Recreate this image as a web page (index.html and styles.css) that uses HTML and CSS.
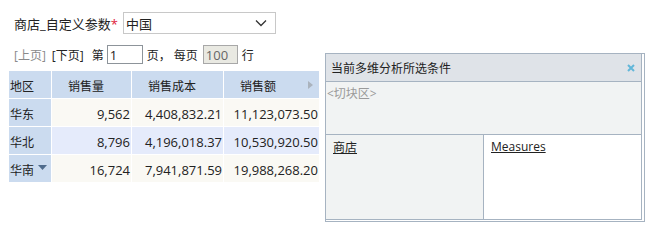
FILE: index.html
```html
<!DOCTYPE html>
<html lang="zh-CN">
<head>
    <meta charset="UTF-8">
    <title>多维分析</title>
    <link rel="stylesheet" href="styles.css">
</head>
<body>
    <div class="param-row">
        <span class="param-label">商店_自定义参数<span class="required">*</span></span>
        <div class="select-box">
            <span>中国</span>
            <svg class="chevron" width="12" height="8" viewBox="0 0 12 8"><path d="M1 1.5 L6 6.5 L11 1.5" fill="none" stroke="#333" stroke-width="1.3"/></svg>
        </div>
    </div>

    <div class="pager">
        <span class="disabled">[上页]</span>
        <span class="link">[下页]</span>
        <span class="word">第</span>
        <input class="page-input" type="text" value="1">
        <span class="word">页，</span>
        <span class="word">每页</span>
        <input class="page-input size" type="text" value="100" readonly>
        <span class="word">行</span>
    </div>

    <div class="grid">
        <div class="cell head dim">地区</div>
        <div class="cell head">销售量</div>
        <div class="cell head">销售成本</div>
        <div class="cell head last">销售额<svg class="more" width="5" height="8" viewBox="0 0 5 8"><path d="M0 0 L5 4 L0 8 Z" fill="#aab3bd"/></svg></div>

        <div class="cell dim">华东</div>
        <div class="cell num">9,562</div>
        <div class="cell num">4,408,832.21</div>
        <div class="cell num">11,123,073.50</div>

        <div class="cell dim">华北</div>
        <div class="cell num alt">8,796</div>
        <div class="cell num alt">4,196,018.37</div>
        <div class="cell num alt">10,530,920.50</div>

        <div class="cell dim">华南<svg class="drop" width="9" height="5" viewBox="0 0 9 5"><path d="M0 0 L9 0 L4.5 5 Z" fill="#4f6b8c"/></svg></div>
        <div class="cell num">16,724</div>
        <div class="cell num">7,941,871.59</div>
        <div class="cell num">19,988,268.20</div>
    </div>

    <div class="panel">
        <div class="panel-inner">
            <div class="panel-title">
                <span>当前多维分析所选条件</span>
                <svg class="close" width="8" height="8" viewBox="0 0 8 8"><path d="M1 1 L7 7 M7 1 L1 7" stroke="#62b7d9" stroke-width="2"/></svg>
            </div>
            <div class="slicer">&lt;切块区&gt;</div>
            <div class="axes">
                <div class="axis rows"><a href="#">商店</a></div>
                <div class="axis cols"><a href="#">Measures</a></div>
            </div>
        </div>
    </div>
</body>
</html>
```

FILE: styles.css
```css
/* General */
body {
    margin: 0;
    font-family: "Open Sans", "Noto Sans CJK SC", sans-serif;
    font-size: 12px;
    color: #222;
    background: #fff;
}

/* Parameter row */
.param-row {
    display: flex;
    align-items: center;
    padding: 12px 0 0 14px;
    height: 22px;
}

.param-label {
    font-size: 13px;
    margin-right: 5px;
}

.required {
    color: #e0203a;
}

.select-box {
    box-sizing: border-box;
    width: 153px;
    height: 22px;
    border: 1px solid #c8c8c8;
    display: flex;
    align-items: center;
    justify-content: space-between;
    padding: 0 8px 0 2px;
    font-size: 13px;
}

/* Pager */
.pager {
    display: flex;
    align-items: center;
    padding-left: 14px;
    margin-top: 11px;
    height: 19px;
}

.pager .disabled {
    color: #8a8a8a;
    margin-right: 6px;
}

.pager .link {
    margin-right: 8px;
}

.pager .word {
    margin-right: 3px;
}

.page-input {
    box-sizing: border-box;
    width: 36px;
    height: 19px;
    border: 1px solid #8d949a;
    padding: 0 2px;
    margin: 0 4px 0 0;
    font-family: inherit;
    font-size: 13px;
    color: #222;
}

.page-input.size {
    width: 35px;
    background: #e9e9e2;
    border-color: #a8a8a8;
    color: #666;
    margin-left: 2px;
}

/* Result grid */
.grid {
    display: grid;
    grid-template-columns: 42px 79px 91px 95px;
    grid-auto-rows: 27px;
    gap: 1px;
    margin: 7px 0 0 9px;
    width: 310px;
}

.cell {
    display: flex;
    align-items: center;
    background: #faf9f4;
    white-space: nowrap;
}

.cell.head {
    background: #cbdbef;
    padding-left: 16px;
    padding-top: 3px;
}

.cell.dim {
    background: #cbdbef;
    padding-left: 1px;
    padding-top: 3px;
}

.cell.head.last {
    position: relative;
}

.more {
    position: absolute;
    right: 6px;
    top: 10px;
}

.drop {
    margin-left: 4px;
    margin-top: -5px;
}

.cell.num {
    justify-content: flex-end;
    padding-right: 1px;
    font-size: 13px;
    padding-top: 3px;
}

.cell.alt {
    background: #e5ebfb;
}

/* Floating condition panel */
.panel {
    position: absolute;
    left: 325px;
    top: 53px;
    width: 316px;
    border: 1px solid #a6b3c1;
    padding: 0 2px 1px 0;
    background: #fff;
}

.panel-inner {
    border-right: 1px solid #a6b3c1;
    border-bottom: 1px solid #a6b3c1;
}

.panel-title {
    display: flex;
    justify-content: space-between;
    align-items: center;
    height: 27px;
    background: #dfe3e8;
    border-bottom: 1px solid #a6b3c1;
    padding: 0 6px 0 5px;
}

.slicer {
    height: 53px;
    background: #f1f3f3;
    border-bottom: 1px solid #a6b3c1;
    color: #9a9a9a;
    padding: 2px 0 0 1px;
    box-sizing: border-box;
}

.axes {
    display: flex;
    height: 84px;
}

.axis {
    padding: 3px 0 0 7px;
}

.axis a {
    color: #222;
}

.axis.rows {
    width: 150px;
    background: #f1f3f3;
    border-right: 1px solid #a6b3c1;
}

.axis.cols {
    flex: 1;
    background: #fff;
}
```
